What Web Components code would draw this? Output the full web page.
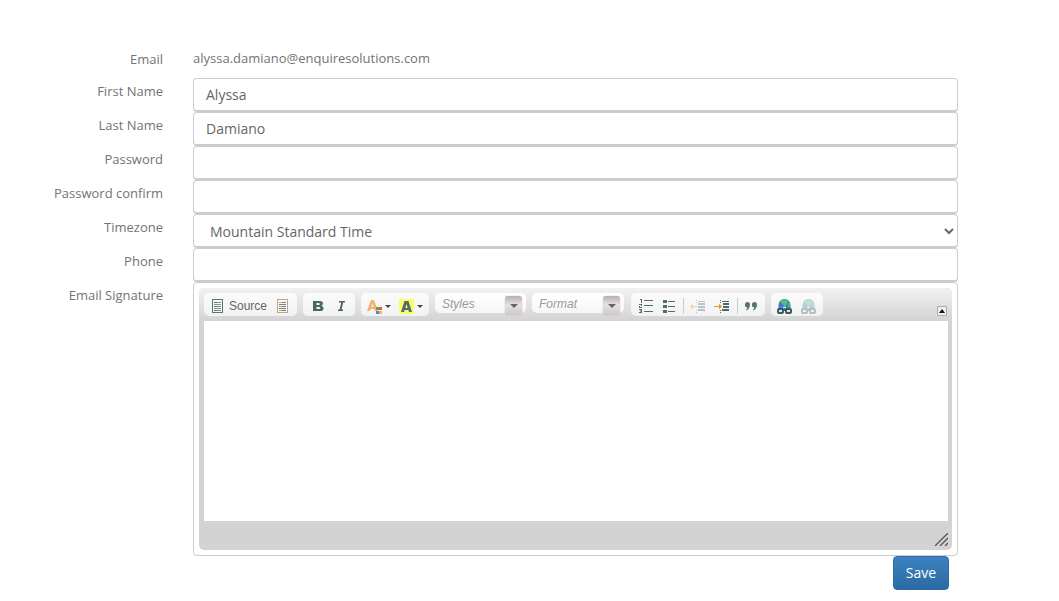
<!DOCTYPE html>
<html>
<head>
<meta charset="utf-8">
<title>Profile</title>
<style>
  html, body { margin: 0; background: #fff; }
  body { font-family: "Open Sans", sans-serif; font-size: 13px; color: #555; }
</style>
</head>
<body>
<profile-form>
  <form-row label="Email" plain>alyssa.damiano@enquiresolutions.com</form-row>
  <form-row label="First Name"><text-box>Alyssa</text-box></form-row>
  <form-row label="Last Name"><text-box>Damiano</text-box></form-row>
  <form-row label="Password"><text-box></text-box></form-row>
  <form-row label="Password confirm"><text-box></text-box></form-row>
  <form-row label="Timezone"><zone-select value="Mountain Standard Time"></zone-select></form-row>
  <form-row label="Phone"><text-box></text-box></form-row>
  <form-row label="Email Signature"><text-box multi><rich-editor></rich-editor></text-box></form-row>
  <save-button slot="actions">Save</save-button>
</profile-form>

<script>
// profile-form.js

class ProfileForm extends HTMLElement {
  constructor() {
    super();
    const shadow = this.attachShadow({mode: 'open'});
    shadow.innerHTML = `
    <style>
      :host {
        display: block;
        padding-top: 44px;
        width: 958px;
      }
      .actions {
        display: flex;
        justify-content: flex-end;
        padding-right: 9px;
      }
    </style>
    <slot></slot>
    <div class="actions"><slot name="actions"></slot></div>`;
  }
}

class FormRow extends HTMLElement {
  constructor() {
    super();
    const shadow = this.attachShadow({mode: 'open'});
    shadow.innerHTML = `
    <style>
      :host {
        display: grid;
        grid-template-columns: 163px 765px;
        column-gap: 30px;
      }
      .label {
        color: #737373;
        font-size: 13px;
        line-height: 18px;
        padding-top: 4px;
        text-align: right;
        white-space: nowrap;
      }
      .value {
        min-width: 0;
      }
      :host([plain]) .label {
        padding-top: 6px;
      }
      :host([plain]) .value {
        color: #737373;
        font-size: 13px;
        height: 34px;
        line-height: 18px;
        padding-top: 5px;
        box-sizing: border-box;
      }
    </style>
    <div class="label"></div>
    <div class="value"><slot></slot></div>`;
    shadow.querySelector('.label').textContent = this.getAttribute('label');
  }
}

class TextBox extends HTMLElement {
  constructor() {
    super();
    const shadow = this.attachShadow({mode: 'open'});
    shadow.innerHTML = `
    <style>
      :host {
        background: #fff;
        border: 1px solid #ccc;
        border-bottom-width: 2px;
        border-radius: 4px;
        box-sizing: border-box;
        color: #666;
        display: block;
        font-size: 14px;
        height: 34px;
        line-height: 31px;
        padding: 0 12px;
      }
      :host([multi]) {
        border-bottom-width: 1px;
        height: 274px;
        padding: 5px;
      }
    </style>
    <slot></slot>`;
  }
}

class ZoneSelect extends HTMLElement {
  constructor() {
    super();
    const shadow = this.attachShadow({mode: 'open'});
    shadow.innerHTML = `
    <style>
      :host {
        display: block;
      }
      select {
        background: #fff;
        border: 1px solid #ccc;
        border-bottom-width: 2px;
        border-radius: 4px;
        box-sizing: border-box;
        color: #666;
        display: block;
        font: 14px "Open Sans", sans-serif;
        height: 34px;
        padding: 2px 12px 0;
        width: 100%;
      }
    </style>
    <select><option></option></select>`;
    shadow.querySelector('option').textContent = this.getAttribute('value');
  }
}

// small pixel icons, all drawn on their own grid
const bars = (x, ys, w, color) => ys.map(y => `<rect x="${x}" y="${y}" width="${w}" height="1" fill="${color}"/>`).join('');
const pageIcon = (stroke, lines) => `
  <rect x="0.5" y="0.5" width="10" height="13" fill="#f6f8f8" stroke="${stroke}"/>
  ${bars(2, [3, 5, 7, 9, 11], 7, lines[0])}
  ${bars(2, [3, 7, 11], 3, lines[1])}`;
const ICONS = {
  source: {w: 11, h: 14, svg: pageIcon('#5a7474', ['#7d9494', '#5a7474'])},
  template: {w: 11, h: 14, svg: pageIcon('#b9a88c', ['#6f8484', '#ee9a48'])},
  bold: {w: 11, h: 10, svg: `<path fill="#4a6868" d="M0 0h7q3 0 3 2.500q0 1.500-1.500 2.300q2 .7 2 2.600q0 2.600-3.500 2.600H0zM3.500 2v2h2.300q1 0 1-1t-1-1zM3.500 6v2h2.600q1.200 0 1.200-1t-1.200-1z"/>`},
  italic: {w: 7, h: 10, svg: `<path fill="#4a6868" d="M1 0h6v1.500H5.200L3.600 8.500H5V10H0V8.500h1.600L3.200 1.500H1z"/>`},
  textcolor: {w: 15, h: 15, svg: `
    <path fill="#f4b26e" d="M4 1h3l4 11H8l-.7-2H3.700L3 12H0zM4.400 8h2.200L5.500 4.400z"/>
    <rect x="9" y="8" width="3" height="3" fill="#58a55c"/><rect x="12" y="8" width="3" height="3" fill="#e8584c"/>
    <rect x="9" y="12" width="3" height="3" fill="#5b7fd8"/><rect x="12" y="12" width="3" height="3" fill="#f0b840"/>`},
  bgcolor: {w: 15, h: 15, svg: `
    <rect width="15" height="15" fill="#fbfb6e"/>
    <path fill="#4f6b6b" d="M5.500 2h4l3.500 11h-3l-.6-2H5.600L5 13H2zM6.300 9h2.400L7.500 5z"/>`},
  numlist: {w: 14, h: 14, svg: `
    <path fill="#4f6b6b" d="M1 0h2v4H2V1H1zM0 5h3v2H1v1h2v1H0V7h2V6H0zM0 10h3v4H0v-1h2v-.5H1v-1h1V11H0z"/>
    ${bars(5, [1, 6, 12], 9, '#4f6b6b')}`},
  bullist: {w: 12, h: 13, svg: `
    <rect width="4" height="3" fill="#4f6b6b"/><rect y="5" width="4" height="3" fill="#4f6b6b"/><rect y="10" width="4" height="3" fill="#4f6b6b"/>
    ${bars(5, [1, 6, 11], 7, '#4f6b6b')}`},
  outdent: {w: 15, h: 13, svg: `
    <g opacity="0.35">
    <path fill="#f09030" d="M0 6.500L3 3.500V6h4v1H3v2.500z"/>
    ${bars(6, [0, 2, 10, 12], 1, '#4f6b6b')}
    <rect x="8" y="1" width="7" height="1" fill="#4f6b6b"/><rect x="8" y="3" width="7" height="2" fill="#4f6b6b"/>
    <rect x="8" y="6" width="7" height="2" fill="#4f6b6b"/><rect x="8" y="9" width="7" height="2" fill="#4f6b6b"/>
    </g>`},
  indent: {w: 15, h: 13, svg: `
    <path fill="#f09030" d="M8 6.500L5 3.500V6H0v1h5v2.500z"/>
    ${bars(6, [0, 2, 10, 12], 1, '#4f6b6b')}
    <rect x="8" y="1" width="7" height="1" fill="#4f6b6b"/><rect x="9" y="3" width="6" height="2" fill="#4f6b6b"/>
    <rect x="9" y="6" width="6" height="2" fill="#4f6b6b"/><rect x="8" y="9" width="7" height="2" fill="#4f6b6b"/>`},
  quote: {w: 12, h: 9, svg: `
    <path fill="#5a7474" d="M0 2.500a2.500 2.500 0 0 1 5 0c0 3-1.500 5-3.500 6l-.5-.8c.7-.6 1.200-1.300 1.300-2.200A2.500 2.500 0 0 1 0 2.500zM7 2.500a2.500 2.500 0 0 1 5 0c0 3-1.500 5-3.500 6l-.5-.8c.7-.6 1.200-1.300 1.300-2.200A2.500 2.500 0 0 1 7 2.500z"/>`},
  link: {w: 15, h: 15, svg: globe(1)},
  unlink: {w: 16, h: 15, svg: globe(0.35)}
};

function globe(opacity) {
  return `<g opacity="${opacity}">
    <path fill="#3f78d8" d="M1.500 10V6a6 6 0 0 1 12 0v4z"/>
    <path fill="#4cc46c" d="M4.500 .8h5l1.500 2-2 3.500v3H6.500V6L3.500 3.500zM11 4h2.200l.3 4h-2z"/>
    <rect x="0" y="9" width="7" height="6" rx="2" fill="#3c5c5c"/>
    <rect x="8" y="9" width="7" height="6" rx="2" fill="#3c5c5c"/>
    <rect x="5" y="10" width="5" height="2" fill="#3c5c5c"/>
    <rect x="2" y="11" width="3" height="2" fill="#dfe8e8"/>
    <rect x="10" y="11" width="3" height="2" fill="#dfe8e8"/>
    <rect x="6" y="8" width="3" height="1" fill="#dfe8e8"/>
  </g>`;
}

class ToolIcon extends HTMLElement {
  constructor() {
    super();
    const icon = ICONS[this.getAttribute('name')];
    const shadow = this.attachShadow({mode: 'open'});
    shadow.innerHTML = `
    <style>
      :host { display: flex; flex: none; }
      svg { display: block; }
    </style>
    <svg width="${icon.w}" height="${icon.h}" viewBox="0 0 ${icon.w} ${icon.h}">${icon.svg}</svg>`;
  }
}

class ToolGroup extends HTMLElement {
  constructor() {
    super();
    const shadow = this.attachShadow({mode: 'open'});
    shadow.innerHTML = `
    <style>
      :host {
        align-items: center;
        background: linear-gradient(#fbfbfb, #f2f2f2);
        border-radius: 5px;
        box-sizing: border-box;
        display: flex;
        flex: none;
        height: 23px;
        padding-top: 3px;
      }
    </style>
    <slot></slot>`;
  }
}

class ToolCombo extends HTMLElement {
  constructor() {
    super();
    const shadow = this.attachShadow({mode: 'open'});
    shadow.innerHTML = `
    <style>
      :host {
        background: linear-gradient(#fff, #f5f5f5);
        border-radius: 5px;
        box-sizing: border-box;
        color: #9a9a9a;
        display: block;
        flex: none;
        font: italic 12px "Liberation Sans", sans-serif;
        height: 20px;
        line-height: 22px;
        padding-left: 7px;
        position: relative;
        width: 91px;
      }
      .open {
        align-items: center;
        background: linear-gradient(#b8aeae, #e6e0e0 45%, #cfc8c8);
        border-radius: 3px;
        bottom: -2px;
        box-shadow: 0 0 1px #999;
        display: flex;
        justify-content: center;
        position: absolute;
        right: 4px;
        top: 3px;
        width: 17px;
      }
      .open::after {
        border-left: 4px solid transparent;
        border-right: 4px solid transparent;
        border-top: 4px solid #666;
        content: "";
      }
    </style>
    <slot></slot><span class="open"></span>`;
  }
}

class RichEditor extends HTMLElement {
  constructor() {
    super();
    const shadow = this.attachShadow({mode: 'open'});
    shadow.innerHTML = `
    <style>
      :host {
        background: #d3d3d3;
        border-radius: 5px;
        display: block;
        height: 262px;
        line-height: normal;
        overflow: hidden;
      }
      .top {
        background: linear-gradient(#f2f2f2, #d3d3d3);
        box-sizing: border-box;
        display: flex;
        gap: 6px;
        height: 33px;
        padding: 5px 0 0 5px;
        position: relative;
      }
      .source {
        color: #666;
        font: 12px "Liberation Sans", sans-serif;
        margin: 0 10px 0 6px;
      }
      .sep {
        background: #ccc;
        flex: none;
        height: 16px;
        width: 1px;
      }
      .arrow {
        border-left: 3px solid transparent;
        border-right: 3px solid transparent;
        border-top: 3px solid #444;
        flex: none;
      }
      .collapse {
        align-items: center;
        background: #f0f0f0;
        border: 1px solid #aaa;
        border-radius: 1px;
        bottom: 5px;
        box-sizing: border-box;
        display: flex;
        height: 10px;
        justify-content: center;
        position: absolute;
        right: 5px;
        width: 10px;
      }
      .collapse::after {
        border-bottom: 4px solid #111;
        border-left: 3px solid transparent;
        border-right: 3px solid transparent;
        content: "";
      }
      .body {
        background: #fff;
        height: 200px;
        margin: 0 4px 0 5px;
      }
      .bottom {
        height: 29px;
        position: relative;
      }
      .grip {
        bottom: 4px;
        position: absolute;
        right: 4px;
      }
    </style>
    <div class="top">
      <tool-group>
        <tool-icon name="source" style="margin-left:8px"></tool-icon>
        <span class="source">Source</span>
        <tool-icon name="template" style="margin-right:9px"></tool-icon>
      </tool-group>
      <tool-group>
        <tool-icon name="bold" style="margin-left:10px"></tool-icon>
        <tool-icon name="italic" style="margin:0 10px 0 14px"></tool-icon>
      </tool-group>
      <tool-group>
        <tool-icon name="textcolor" style="margin-left:6px"></tool-icon>
        <span class="arrow" style="margin-left:3px"></span>
        <tool-icon name="bgcolor" style="margin-left:8px"></tool-icon>
        <span class="arrow" style="margin:0 6px 0 3px"></span>
      </tool-group>
      <tool-combo>Styles</tool-combo>
      <tool-combo style="margin-right:1px;width:92px">Format</tool-combo>
      <tool-group>
        <tool-icon name="numlist" style="margin-left:8px"></tool-icon>
        <tool-icon name="bullist" style="margin-left:10px"></tool-icon>
        <span class="sep" style="margin:0 6px 0 8px"></span>
        <tool-icon name="outdent"></tool-icon>
        <tool-icon name="indent" style="margin-left:9px"></tool-icon>
        <span class="sep" style="margin:0 7px 0 8px"></span>
        <tool-icon name="quote" style="margin-right:8px"></tool-icon>
      </tool-group>
      <tool-group>
        <tool-icon name="link" style="margin-left:6px"></tool-icon>
        <tool-icon name="unlink" style="margin:0 6px 0 9px"></tool-icon>
      </tool-group>
      <span class="collapse"></span>
    </div>
    <div class="body" contenteditable="true"></div>
    <div class="bottom">
      <svg class="grip" width="13" height="13" viewBox="0 0 13 13">
        <path d="M0 13L13 0M5 13L13 5M10 13L13 10" stroke="#555" stroke-width="1.300" fill="none"/>
      </svg>
    </div>`;
  }
}

class SaveButton extends HTMLElement {
  constructor() {
    super();
    const shadow = this.attachShadow({mode: 'open'});
    shadow.innerHTML = `
    <style>
      :host {
        background: linear-gradient(#3b82c0, #2b6aa3);
        border: 1px solid #2e6da4;
        border-radius: 4px;
        box-sizing: border-box;
        color: #fff;
        cursor: pointer;
        display: block;
        font-size: 14px;
        height: 34px;
        line-height: 32px;
        text-align: center;
        width: 56px;
      }
    </style>
    <slot></slot>`;
  }
}

customElements.define('profile-form', ProfileForm);
customElements.define('form-row', FormRow);
customElements.define('text-box', TextBox);
customElements.define('zone-select', ZoneSelect);
customElements.define('tool-icon', ToolIcon);
customElements.define('tool-group', ToolGroup);
customElements.define('tool-combo', ToolCombo);
customElements.define('rich-editor', RichEditor);
customElements.define('save-button', SaveButton);
</script>
</body>
</html>
